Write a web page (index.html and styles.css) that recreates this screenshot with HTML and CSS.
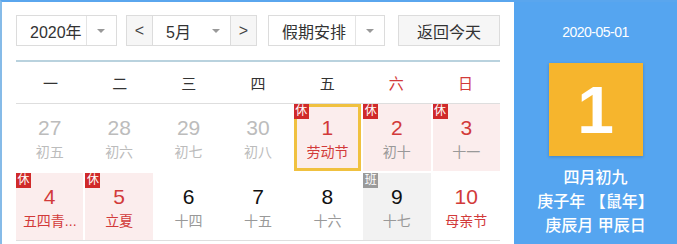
FILE: index.html
```html
<!DOCTYPE html>
<html>
<head>
    <title>万年历</title>
    <link rel="stylesheet" href="styles.css">
</head>
<body>
    <div class="wrap">
        <div class="cal">
            <div class="toolbar">
                <div class="select year"><span class="val">2020年</span><span class="drop"><i class="arrow"></i></span></div>
                <div class="month-group">
                    <button class="nav">&lt;</button>
                    <div class="select month"><span class="val">5月</span><i class="arrow"></i></div>
                    <button class="nav">&gt;</button>
                </div>
                <div class="select holiday"><span class="val">假期安排</span><span class="drop"><i class="arrow"></i></span></div>
                <button class="today">返回今天</button>
            </div>

            <div class="weekdays">
                <span>一</span><span>二</span><span>三</span><span>四</span><span>五</span>
                <span class="red">六</span><span class="red">日</span>
            </div>

            <div class="days">
                <div class="day other"><b>27</b><small>初五</small></div>
                <div class="day other"><b>28</b><small>初六</small></div>
                <div class="day other"><b>29</b><small>初七</small></div>
                <div class="day other"><b>30</b><small>初八</small></div>
                <div class="day rest fest selected"><span class="tag">休</span><b>1</b><small>劳动节</small></div>
                <div class="day rest"><span class="tag">休</span><b>2</b><small>初十</small></div>
                <div class="day rest"><span class="tag">休</span><b>3</b><small>十一</small></div>

                <div class="day rest fest"><span class="tag">休</span><b>4</b><small>五四青...</small></div>
                <div class="day rest fest"><span class="tag">休</span><b>5</b><small>立夏</small></div>
                <div class="day"><b>6</b><small>十四</small></div>
                <div class="day"><b>7</b><small>十五</small></div>
                <div class="day"><b>8</b><small>十六</small></div>
                <div class="day work"><span class="tag">班</span><b>9</b><small>十七</small></div>
                <div class="day weekend fest"><b>10</b><small>母亲节</small></div>
            </div>
        </div>

        <div class="side">
            <div class="date">2020-05-01</div>
            <div class="big">1</div>
            <div class="lunar">
                <p>四月初九</p>
                <p>庚子年 【鼠年】</p>
                <p>庚辰月 甲辰日</p>
            </div>
        </div>
    </div>
</body>
</html>
```

FILE: styles.css
```css
body {
    margin: 0;
    font-family: "Liberation Sans", "Noto Sans CJK SC", sans-serif;
    color: #333;
    background: #fff;
}

.wrap {
    display: flex;
    height: 100vh;
    box-sizing: border-box;
    border-top: 2px solid #5aa6ee;
    border-left: 2px solid #86bbe8;
    overflow: hidden;
}

.cal {
    width: 484px;
    padding: 13px 14px 0 14px;
    background: #fff;
}

/* toolbar */
.toolbar {
    display: flex;
    align-items: center;
    height: 31px;
    padding-bottom: 14px;
    border-bottom: 2px solid #b9d2de;
}

.select,
.nav,
.today {
    display: flex;
    align-items: center;
    box-sizing: border-box;
    height: 31px;
    border: 1px solid #dcdcdc;
    background: #fff;
    font-family: inherit;
    font-size: 16px;
    color: #333;
    padding: 0;
}

.select .val {
    padding-left: 13px;
}

.drop {
    display: flex;
    align-items: center;
    justify-content: center;
    height: 100%;
    border-left: 1px solid #e4e4e4;
}

.arrow {
    display: block;
    width: 0;
    height: 0;
    border-left: 4px solid transparent;
    border-right: 4px solid transparent;
    border-top: 4px solid #999;
}

.year {
    width: 101px;
}

.year .val {
    width: 57px;
}

.year .drop {
    width: 30px;
}

.month-group {
    display: flex;
    margin-left: 9px;
}

.nav {
    width: 27px;
    justify-content: center;
    background: #f6f6f6;
    color: #444;
}

.month {
    width: 77px;
    border-left: none;
    border-right: none;
}

.month .val {
    width: 46px;
}

.holiday {
    width: 117px;
    margin-left: 11px;
}

.holiday .val {
    width: 74px;
}

.holiday .drop {
    width: 29px;
}

.today {
    width: 103px;
    justify-content: center;
    margin-left: 13px;
    background: #f6f6f6;
}

/* weekday header */
.weekdays {
    display: grid;
    grid-template-columns: repeat(7, 1fr);
    height: 41px;
    align-items: center;
    text-align: center;
    font-size: 15px;
    border-bottom: 1px solid #dedede;
}

.red {
    color: #d23a3a;
}

/* day grid */
.days {
    display: grid;
    grid-template-columns: repeat(7, 1fr);
    grid-auto-rows: 67px;
    gap: 2px;
    border-bottom: 1px solid #dedede;
}

.day {
    position: relative;
    display: flex;
    flex-direction: column;
    align-items: center;
    padding-top: 12px;
    box-sizing: border-box;
}

.day b {
    font-weight: normal;
    font-size: 21px;
    line-height: 24px;
    color: #111;
}

.day small {
    margin-top: 2px;
    font-size: 14px;
    line-height: 20px;
    color: #999;
}

.day.other b,
.day.other small {
    color: #bcbcbc;
}

.day.rest {
    background: #fbeded;
}

.day.rest b,
.day.weekend b,
.day.fest small {
    color: #d23a3a;
}

.day.work {
    background: #f2f2f2;
}

.day.selected {
    box-shadow: inset 0 0 0 3px #f0c140;
}

.tag {
    position: absolute;
    top: 0;
    left: 0;
    width: 15px;
    height: 15px;
    line-height: 15px;
    text-align: center;
    font-size: 12px;
    color: #fff;
    background: #d02a2a;
}

.day.work .tag {
    background: #9a9a9a;
}

/* right panel */
.side {
    flex: 1;
    display: flex;
    flex-direction: column;
    align-items: center;
    background: #55a5f0;
    color: #fff;
    padding-top: 20px;
}

.date {
    font-size: 14px;
    line-height: 20px;
    letter-spacing: -0.5px;
}

.big {
    width: 94px;
    height: 93px;
    margin-top: 21px;
    background: #f6b52d;
    box-shadow: 0 1px 3px rgba(0, 0, 0, 0.2);
    display: flex;
    align-items: center;
    justify-content: center;
    font-size: 66px;
    font-weight: bold;
    line-height: 1;
}

.lunar {
    margin-top: 10px;
    text-align: center;
    font-size: 16px;
    font-weight: 500;
    line-height: 24px;
}

.lunar p {
    margin: 0;
}
```
